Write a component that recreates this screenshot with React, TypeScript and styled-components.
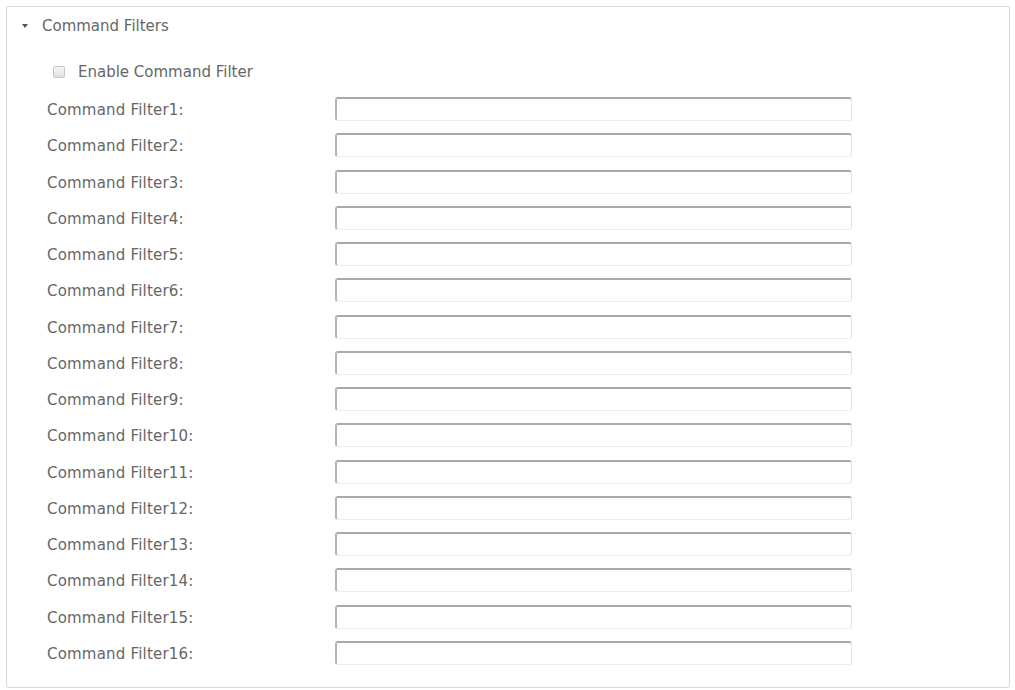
import styled, { createGlobalStyle } from 'styled-components';

const GlobalStyle = createGlobalStyle`
  body {
    margin: 0;
    background: #ffffff;
    font-family: 'DejaVu Sans', Verdana, sans-serif;
  }
`;

const Panel = styled.section`
  box-sizing: border-box;
  margin: 6px 0 0 6px;
  width: 1004px;
  height: 682px;
  border: 1px solid #d9d9d9;
  border-radius: 2px;
  color: #666666;
  font-size: 15px;
`;

const Header = styled.div`
  display: flex;
  align-items: center;
  height: 38px;
  padding-left: 15px;
  gap: 14px;
`;

const Caret = styled.span`
  width: 0;
  height: 0;
  border-left: 3.5px solid transparent;
  border-right: 3.5px solid transparent;
  border-top: 4px solid #555;
`;

const EnableRow = styled.label`
  display: flex;
  align-items: center;
  height: 20px;
  margin-top: 17px;
  padding-left: 46px;
  gap: 13px;
`;

const Checkbox = styled.span`
  box-sizing: border-box;
  width: 12px;
  height: 12px;
  border: 1px solid #c8c8c8;
  border-radius: 2px;
  background: linear-gradient(#f6f6f6, #e0e0e0);
`;

const Form = styled.div`
  display: flex;
  flex-direction: column;
  gap: 12.27px;
  margin-top: 15px;
  padding-left: 40px;
`;

const Row = styled.div`
  display: grid;
  grid-template-columns: 288px 517px;
  align-items: center;
  height: 24px;
`;

const Label = styled.span`
  padding-top: 2px;
  white-space: nowrap;
  letter-spacing: 0.2px;
`;

const TextInput = styled.input`
  box-sizing: border-box;
  width: 517px;
  height: 24px;
  margin: 0;
  padding: 0 6px;
  border-style: solid;
  border-width: 2px 1px 1px 2px;
  border-color: #a9a9a9 #e4e4e4 #ececec #b4b4b4;
  border-radius: 3px;
  background: #ffffff;
  font: inherit;
  outline: none;
`;

const FILTERS = Array.from({ length: 16 }, (_, i) => i + 1);

export default function App() {
  return (
    <>
      <GlobalStyle />
      <Panel>
        <Header>
          <Caret />
          <span>Command Filters</span>
        </Header>
        <EnableRow>
          <Checkbox />
          <span>Enable Command Filter</span>
        </EnableRow>
        <Form>
          {FILTERS.map((n) => (
            <Row key={n}>
              <Label>Command Filter{n}:</Label>
              <TextInput type="text" aria-label={`Command Filter${n}`} />
            </Row>
          ))}
        </Form>
      </Panel>
    </>
  );
}
